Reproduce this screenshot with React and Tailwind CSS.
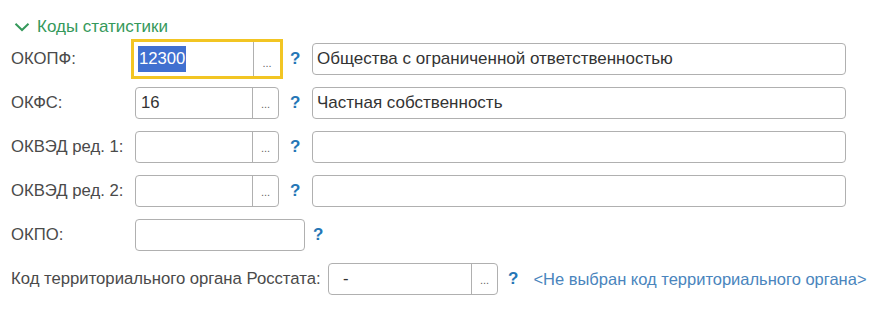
import React from "react";

const FONT = { fontFamily: '"Liberation Sans", Arial, sans-serif' };

function Help() {
  return <span className="font-bold text-[17px] text-[#2576b6] leading-none">?</span>;
}

function Dots() {
  return (
    <div className="w-[26px] h-full flex items-end justify-center pb-[8px] border-l border-[#b0b0b0] text-[11px] leading-none text-[#666]">
      ...
    </div>
  );
}

function PickField({ value, focused, width = "w-[144px]" }) {
  if (focused) {
    return (
      <div className="-m-1 border-[3px] border-[#f2c523] bg-white">
        <div className="w-[146px] h-[34px] flex items-center">
          <div className="w-[119px] pl-[4px] flex items-center">
            <span className="bg-[#4070d0] text-white px-px">{value}</span>
          </div>
          <div className="flex-1 h-full flex items-end justify-center pb-[7px] border-l border-[#b0b0b0] text-[11px] leading-none text-[#666]">
            ...
          </div>
        </div>
      </div>
    );
  }
  return (
    <div className={`${width} h-8 flex items-center border border-[#b0b0b0] rounded-[4px] bg-white`}>
      <div className="flex-1 pl-[5px] text-[#333]">{value}</div>
      <Dots />
    </div>
  );
}

function Row({ label, value, focused, text }) {
  return (
    <div className="flex items-center h-8">
      <div className="w-[124px] text-[#4a4a4a]">{label}</div>
      <PickField value={value} focused={focused} />
      <div className="ml-[11px] w-[22px]">
        <Help />
      </div>
      <div className="w-[534px] h-8 flex items-center border border-[#b0b0b0] rounded-[4px] pl-[4px] text-[17px] text-[#333]">
        {text}
      </div>
    </div>
  );
}

export default function App() {
  return (
    <div className="w-[891px] h-[326px] bg-white pt-[16px] pl-[11px] text-[16.7px]" style={FONT}>
      <div className="h-[22px] flex items-center text-[17px] text-[#35995b]">
        <svg width="16" height="10" viewBox="0 0 16 10" className="ml-[3px] mr-[7px]">
          <path d="M1.5 1.8 L8 8 L14.5 1.8" fill="none" stroke="#35995b" strokeWidth="2" />
        </svg>
        <span>Коды статистики</span>
      </div>

      <div className="mt-[5px] flex flex-col gap-3">
        <Row label="ОКОПФ:" value="12300" focused text="Общества с ограниченной ответственностью" />
        <Row label="ОКФС:" value="16" text="Частная собственность" />
        <Row label="ОКВЭД ред. 1:" value="" text="" />
        <Row label="ОКВЭД ред. 2:" value="" text="" />

        <div className="flex items-center h-8">
          <div className="w-[124px] text-[#4a4a4a]">ОКПО:</div>
          <div className="w-[170px] h-8 border border-[#b0b0b0] rounded-[4px]" />
          <div className="ml-[8px]">
            <Help />
          </div>
        </div>

        <div className="flex items-center h-8">
          <div className="w-[317px] text-[#4a4a4a]">Код территориального органа Росстата:</div>
          <div className="w-[170px] h-8 flex items-center border border-[#b0b0b0] rounded-[4px]">
            <div className="flex-1 pl-[14px] text-[#333]">-</div>
            <Dots />
          </div>
          <div className="ml-[10px] mr-[15px]">
            <Help />
          </div>
          <span className="text-[#4a85bd] text-[16.5px]">&lt;Не выбран код территориального органа&gt;</span>
        </div>
      </div>
    </div>
  );
}
